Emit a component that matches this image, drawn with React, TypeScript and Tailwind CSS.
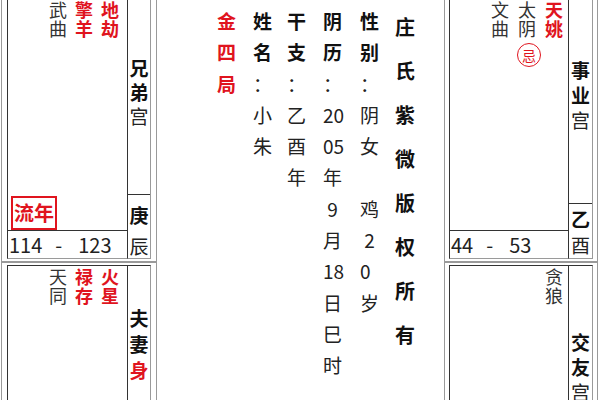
import React from "react";

type Ch = { c: string; b?: boolean; red?: boolean };

function StarCol({ text, red }: { text: string; red?: boolean }) {
  return (
    <div className={red ? "flex flex-col w-[18px] text-[#e0141e] font-bold" : "flex flex-col w-[18px] text-[#333]"}>
      {Array.from(text).map((c, i) => (
        <span key={i} className="block h-[19px] leading-[19px]">
          {c}
        </span>
      ))}
    </div>
  );
}

function LabelChar({ ch }: { ch: Ch }) {
  const cls = ch.red
    ? "block text-center font-bold text-[#e0141e]"
    : ch.b
    ? "block text-center font-bold text-[#111]"
    : "block text-center text-[#222]";
  return <span className={cls}>{ch.c}</span>;
}

function CenterCol({ items, red }: { items: Ch[]; red?: boolean }) {
  return (
    <div className="flex flex-col text-[19px] whitespace-pre">
      {items.map((it, i) => (
        <span
          key={i}
          className={
            red
              ? "block h-[31.3px] leading-[31.3px] font-bold text-[#e0141e]"
              : it.b
              ? "block h-[31.3px] leading-[31.3px] font-bold text-[#111]"
              : "block h-[31.3px] leading-[31.3px] text-[#222]"
          }
        >
          {it.c}
        </span>
      ))}
    </div>
  );
}

const chars = (s: string, b?: boolean): Ch[] => Array.from(s).map((c) => ({ c, b }));

export default function App() {
  return (
    <div className="w-[600px] h-[400px] overflow-hidden bg-white font-['Noto_Sans_CJK_SC',sans-serif] text-[#222]">
      <div className="flex -mt-[5px]">
        {/* LEFT COLUMN */}
        <div className="w-[157px] pl-[1px] flex flex-col">
          {/* top-left palace */}
          <div className="w-[156px] h-[267px] border border-[#9a9a9a] px-[5px] py-[2px]">
            <div className="flex h-full">
              <div className="w-[120px] h-full flex flex-col border-l border-t border-b border-l-[#333] border-t-[#333] border-b-[#9a9a9a]">
                <div className="flex-1 flex flex-col justify-between">
                  <div className="flex justify-end gap-[8px] pr-[8px] pt-[1px] text-[18px]">
                    <StarCol text="武曲" />
                    <StarCol text="擎羊" red />
                    <StarCol text="地劫" red />
                  </div>
                  <div className="ml-[3px] w-[46px] h-[34px] border-2 border-[#e0141e] flex items-center justify-center text-[20px] leading-[28px] font-bold text-[#e0141e]">
                    流年
                  </div>
                </div>
                <div className="h-[28px] border-t border-[#333] flex items-center text-[20px] leading-[27px] text-[#222] whitespace-pre">
                  <span className="ml-[1px]">114</span>
                  <span className="ml-[13px]">-</span>
                  <span className="ml-[16px]">123</span>
                </div>
              </div>
              <div className="w-[24px] h-full flex flex-col border-l border-t border-r border-b border-l-[#333] border-t-[#333] border-r-[#9a9a9a] border-b-[#9a9a9a] text-[19px]">
                <div className="flex-1 pt-[57px] leading-[24px]">
                  <LabelChar ch={{ c: "兄", b: true }} />
                  <LabelChar ch={{ c: "弟", b: true }} />
                  <LabelChar ch={{ c: "宫" }} />
                </div>
                <div className="h-[64px] overflow-hidden border-t border-[#333] pt-[4px] leading-[31px]">
                  <LabelChar ch={{ c: "庚", b: true }} />
                  <LabelChar ch={{ c: "辰" }} />
                </div>
              </div>
            </div>
          </div>
          {/* bottom-left palace */}
          <div className="w-[156px] h-[200px] border border-[#9a9a9a] px-[5px] py-[2px]">
            <div className="flex h-full">
              <div className="w-[120px] h-full flex flex-col border-l border-t border-l-[#333] border-t-[#333]">
                <div className="flex justify-end gap-[8px] pr-[8px] pt-[1px] text-[18px]">
                  <StarCol text="天同" />
                  <StarCol text="禄存" red />
                  <StarCol text="火星" red />
                </div>
              </div>
              <div className="w-[24px] h-full flex flex-col border-l border-t border-r border-l-[#333] border-t-[#333] border-r-[#9a9a9a] text-[19px]">
                <div className="pt-[39px] leading-[26px]">
                  <LabelChar ch={{ c: "夫", b: true }} />
                  <LabelChar ch={{ c: "妻", b: true }} />
                  <LabelChar ch={{ c: "身", red: true }} />
                </div>
              </div>
            </div>
          </div>
        </div>

        {/* CENTER */}
        <div className="w-[286px] flex pt-[10px]">
          <div className="ml-[60px] w-[20px]">
            <CenterCol red items={chars("金四局")} />
          </div>
          <div className="ml-[16px] w-[20px]">
            <CenterCol items={[...chars("姓名", true), ...chars("：小朱")]} />
          </div>
          <div className="ml-[14px] w-[20px]">
            <CenterCol items={[...chars("干支", true), ...chars("：乙酉年")]} />
          </div>
          <div className="ml-[16px] w-[22px]">
            <CenterCol
              items={[
                ...chars("阴历", true),
                { c: "：" },
                { c: "20" },
                { c: "05" },
                { c: "年" },
                { c: " 9" },
                { c: "月" },
                { c: "18" },
                { c: "日" },
                { c: "巳" },
                { c: "时" },
              ]}
            />
          </div>
          <div className="ml-[15px] w-[20px]">
            <CenterCol
              items={[
                ...chars("性别", true),
                { c: "：" },
                { c: "阴" },
                { c: "女" },
                { c: " " },
                { c: "鸡" },
                { c: " 2" },
                { c: "0" },
                { c: "岁" },
              ]}
            />
          </div>
          <div className="ml-[15px] w-[20px] flex flex-col text-[20px] font-bold text-[#111]">
            {Array.from("庄氏紫微版权所有").map((c, i) => (
              <span key={i} className="block h-[44px] leading-[44px]">
                {c}
              </span>
            ))}
          </div>
        </div>

        {/* RIGHT COLUMN */}
        <div className="w-[157px] pl-[1px] pr-[2px] flex flex-col">
          {/* top-right palace */}
          <div className="w-[154px] h-[267px] border border-[#9a9a9a] px-[4px] py-[2px]">
            <div className="flex h-full">
              <div className="w-[119px] h-full flex flex-col border-l border-t border-b border-l-[#333] border-t-[#333] border-b-[#9a9a9a]">
                <div className="flex-1">
                  <div className="flex justify-end gap-[9px] pr-[5px] pt-[1px] text-[18px]">
                    <StarCol text="文曲" />
                    <div className="flex flex-col items-center w-[18px]">
                      <StarCol text="太阴" />
                      <div className="mt-[5px] ml-[4px] shrink-0 w-[24px] h-[24px] rounded-full border border-[#e0141e] flex items-center justify-center text-[14px] leading-[14px] text-[#e0141e]">
                        忌
                      </div>
                    </div>
                    <StarCol text="天姚" red />
                  </div>
                </div>
                <div className="h-[28px] border-t border-[#333] flex items-center text-[20px] leading-[27px] text-[#222] whitespace-pre">
                  <span className="ml-[1px]">44</span>
                  <span className="ml-[13px]">-</span>
                  <span className="ml-[16px]">53</span>
                </div>
              </div>
              <div className="w-[25px] h-full flex flex-col border-l border-t border-r border-b border-l-[#333] border-t-[#333] border-r-[#9a9a9a] border-b-[#9a9a9a] text-[19px]">
                <div className="flex-1 pt-[58px] leading-[25px]">
                  <LabelChar ch={{ c: "事", b: true }} />
                  <LabelChar ch={{ c: "业", b: true }} />
                  <LabelChar ch={{ c: "宫" }} />
                </div>
                <div className="h-[55px] overflow-hidden border-t border-[#333] pt-[2px] leading-[26px]">
                  <LabelChar ch={{ c: "乙", b: true }} />
                  <LabelChar ch={{ c: "酉" }} />
                </div>
              </div>
            </div>
          </div>
          {/* bottom-right palace */}
          <div className="w-[154px] h-[200px] border border-[#9a9a9a] px-[4px] py-[2px]">
            <div className="flex h-full">
              <div className="w-[119px] h-full flex flex-col border-l border-t border-l-[#333] border-t-[#333]">
                <div className="flex justify-end pr-[5px] pt-[1px] text-[18px]">
                  <StarCol text="贪狼" />
                </div>
              </div>
              <div className="w-[25px] h-full flex flex-col border-l border-t border-r border-l-[#333] border-t-[#333] border-r-[#9a9a9a] text-[19px]">
                <div className="pt-[63px] leading-[25px]">
                  <LabelChar ch={{ c: "交", b: true }} />
                  <LabelChar ch={{ c: "友", b: true }} />
                  <LabelChar ch={{ c: "宫" }} />
                </div>
              </div>
            </div>
          </div>
        </div>
      </div>
    </div>
  );
}
